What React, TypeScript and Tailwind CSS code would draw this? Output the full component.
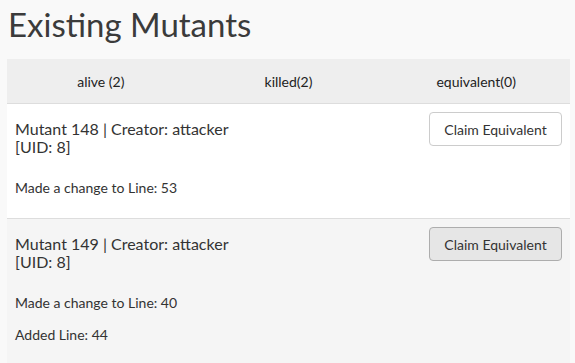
const mutants = [
  { id: 148, creator: "attacker", uid: 8, lines: ["Made a change to Line: 53"], active: false },
  { id: 149, creator: "attacker", uid: 8, lines: ["Made a change to Line: 40", "Added Line: 44"], active: true },
];

const tabs = ["alive (2)", "killed(2)", "equivalent(0)"];

export default function App() {
  return (
    <div
      className="min-h-screen bg-[#f9f9f9] text-[#333] pl-[7px] pr-[5px]"
      style={{ fontFamily: "Lato, 'Liberation Sans', sans-serif" }}
    >
      <h1 className="text-[33px] leading-[36px] pt-[6px] pb-[17px] pl-px text-[#3b3b3b]">Existing Mutants</h1>
      <div className="bg-white">
        <div className="grid grid-cols-3 h-[45px] bg-[#eeeeee] border-b border-[#dddddd] text-[14px] text-[#222]">
          {tabs.map((t) => (
            <div key={t} className="flex items-center justify-center">
              {t}
            </div>
          ))}
        </div>
        {mutants.map((m) => (
          <div
            key={m.id}
            className={`flex justify-between px-2 pt-2 pb-5 ${m.active ? "bg-[#f5f5f5] min-h-[150px]" : "bg-white border-b border-[#dddddd]"}`}
          >
            <div className="pt-2">
              <div className="text-[16px] leading-[18px] text-[#333]">
                Mutant {m.id} | Creator: {m.creator}
                <br />[UID: {m.uid}]
              </div>
              <div className="mt-[22px] flex flex-col gap-3 text-[14px] leading-[20px] text-[#333]">
                {m.lines.map((l) => (
                  <div key={l}>{l}</div>
                ))}
              </div>
            </div>
            <div>
              <button
                className={`h-[34px] w-[133px] rounded-[4px] border text-[14px] text-[#333] ${m.active ? "bg-[#e6e6e6] border-[#adadad]" : "bg-white border-[#cccccc]"}`}
              >
                Claim Equivalent
              </button>
            </div>
          </div>
        ))}
      </div>
    </div>
  );
}
